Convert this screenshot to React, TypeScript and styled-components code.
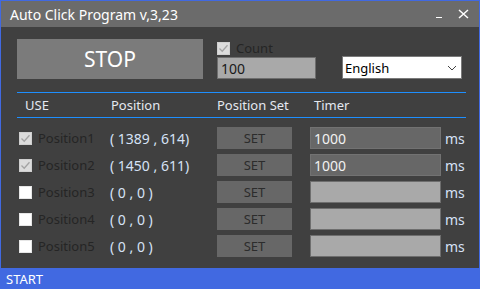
import React from 'react';
import styled, {createGlobalStyle} from 'styled-components';

const GlobalStyle = createGlobalStyle`
  html, body {
    margin: 0;
    padding: 0;
    background: #404040;
  }
  * {
    box-sizing: border-box;
  }
  body {
    font-family: "Noto Sans", "Noto Sans CJK KR", sans-serif;
  }
`

const Window = styled.div`
  width: 480px;
  height: 289px;
  display: flex;
  flex-direction: column;
  background: #404040;
  border: 1px solid #4169e1;
  border-bottom: none;
  overflow: hidden;
`

const TitleBar = styled.div`
  height: 26px;
  flex: none;
  display: flex;
  align-items: center;
  padding-left: 9px;
  background: #6b6b6b;
  color: #ffffff;
  font-size: 14px;
`

const Title = styled.span`
  flex: 1;
`

const TitleButton = styled.span`
  width: 24px;
  height: 26px;
  display: flex;
  align-items: center;
  justify-content: center;
`

const Body = styled.div`
  flex: 1;
  padding: 12px 0 0 16px;
`

const TopRow = styled.div`
  display: flex;
  align-items: flex-start;
  height: 40px;
`

const StopButton = styled.div`
  width: 186px;
  height: 40px;
  background: #7b7b7b;
  color: #ffffff;
  font-size: 21px;
  display: flex;
  align-items: center;
  justify-content: center;
`

const CountColumn = styled.div`
  margin-left: 14px;
  display: flex;
  flex-direction: column;
`

const CheckLine = styled.label`
  display: flex;
  align-items: center;
  height: 16px;
  margin-top: 1px;
  gap: 6px;
  color: #252525;
  font-size: 13px;
`

const Box = styled.span<{checked?: boolean}>`
  width: 13px;
  height: 13px;
  flex: none;
  display: flex;
  align-items: center;
  justify-content: center;
  background: ${p => (p.checked ? '#dcdcdc' : '#ffffff')};
  border: 1px solid ${p => (p.checked ? '#cfcfcf' : '#e6e6e6')};
`

const Field = styled.div<{dark?: boolean; width: number}>`
  width: ${p => p.width}px;
  height: 22px;
  display: flex;
  align-items: center;
  padding-left: 3px;
  font-size: 14px;
  background: ${p => (p.dark ? '#676767' : '#a9a9a9')};
  border: 1px solid ${p => (p.dark ? '#727272' : '#6e6e6e')};
  color: ${p => (p.dark ? '#f2f2f2' : '#1a1a1a')};
`

const CountField = styled(Field)`
  margin-top: 1px;
`

const Select = styled.div`
  margin-left: 26px;
  margin-top: 17px;
  width: 120px;
  height: 23px;
  background: #ffffff;
  border: 1px solid #7a7a7a;
  display: flex;
  align-items: center;
  justify-content: space-between;
  padding: 0 4px 0 2px;
  font-size: 13px;
  color: #000000;
`

const Divider = styled.div<{top: number}>`
  width: 449px;
  height: 1px;
  margin-top: ${p => p.top}px;
  background: #1e8fff;
`

const Grid = styled.div`
  display: grid;
  grid-template-columns: 93px 107px 93px 135px auto;
  align-items: center;
`

const HeaderRow = styled(Grid)`
  height: 24px;
  color: #e4e8f0;
  font-size: 13px;
`

const HeaderCell = styled.span<{pad?: number}>`
  padding-left: ${p => p.pad || 0}px;
`

const Rows = styled.div`
  display: flex;
  flex-direction: column;
  gap: 5px;
  padding-top: 9px;
`

const Row = styled(Grid)`
  height: 22px;
`

const UseCell = styled(CheckLine)`
  margin: 0 0 0 2px;
  gap: 6px;
`

const Coord = styled.span`
  color: #d6e2f6;
  font-size: 14px;
  white-space: pre;
`

const SetButton = styled.div`
  width: 75px;
  height: 22px;
  background: #676767;
  color: #2c2c2c;
  font-size: 13px;
  display: flex;
  align-items: center;
  justify-content: center;
`

const Unit = styled.span`
  color: #d6e2f6;
  font-size: 14px;
`

const StatusBar = styled.div`
  height: 21px;
  flex: none;
  margin: 0 -1px;
  padding-left: 6px;
  display: flex;
  align-items: center;
  background: #4169e1;
  color: #ffffff;
  font-size: 13px;
`

function Check() {
    return (
        <svg width="11" height="11" viewBox="0 0 11 11">
            <path d="M1.5 5.5 L4.2 8.2 L9.5 2.2" fill="none" stroke="#a3a3a3" strokeWidth="1.3"/>
        </svg>
    );
}

const positions = [
    {name: 'Position1', on: true, coord: '( 1389 , 614)', timer: '1000'},
    {name: 'Position2', on: true, coord: '( 1450 , 611)', timer: '1000'},
    {name: 'Position3', on: false, coord: '( 0 , 0 )', timer: ''},
    {name: 'Position4', on: false, coord: '( 0 , 0 )', timer: ''},
    {name: 'Position5', on: false, coord: '( 0 , 0 )', timer: ''},
];

export default function App() {
    return (
        <>
            <GlobalStyle/>
            <Window>
                <TitleBar>
                    <Title>Auto Click Program v,3,23</Title>
                    <TitleButton>
                        <svg width="8" height="10" viewBox="0 0 8 10">
                            <path d="M1 8.5 H7" stroke="#ffffff" strokeWidth="1"/>
                        </svg>
                    </TitleButton>
                    <TitleButton style={{marginRight: 4}}>
                        <svg width="11" height="10" viewBox="0 0 11 10">
                            <path d="M1 1 L10 9 M10 1 L1 9" stroke="#ffffff" strokeWidth="1.5"/>
                        </svg>
                    </TitleButton>
                </TitleBar>
                <Body>
                    <TopRow>
                        <StopButton>STOP</StopButton>
                        <CountColumn>
                            <CheckLine>
                                <Box checked><Check/></Box>
                                Count
                            </CheckLine>
                            <CountField width={99}>100</CountField>
                        </CountColumn>
                        <Select>
                            <span>English</span>
                            <svg width="10" height="6" viewBox="0 0 10 6">
                                <path d="M1 1 L5 5 L9 1" fill="none" stroke="#444" strokeWidth="1"/>
                            </svg>
                        </Select>
                    </TopRow>
                    <Divider top={13}/>
                    <HeaderRow>
                        <HeaderCell pad={8}>USE</HeaderCell>
                        <HeaderCell pad={1}>Position</HeaderCell>
                        <HeaderCell>Position Set</HeaderCell>
                        <HeaderCell pad={4}>Timer</HeaderCell>
                        <span/>
                    </HeaderRow>
                    <Divider top={0}/>
                    <Rows>
                        {positions.map(p => (
                            <Row key={p.name}>
                                <UseCell>
                                    <Box checked={p.on}>{p.on && <Check/>}</Box>
                                    {p.name}
                                </UseCell>
                                <Coord>{p.coord}</Coord>
                                <SetButton>SET</SetButton>
                                <Field width={131} dark={p.on}>{p.timer}</Field>
                                <Unit>ms</Unit>
                            </Row>
                        ))}
                    </Rows>
                </Body>
                <StatusBar>START</StatusBar>
            </Window>
        </>
    );
}
